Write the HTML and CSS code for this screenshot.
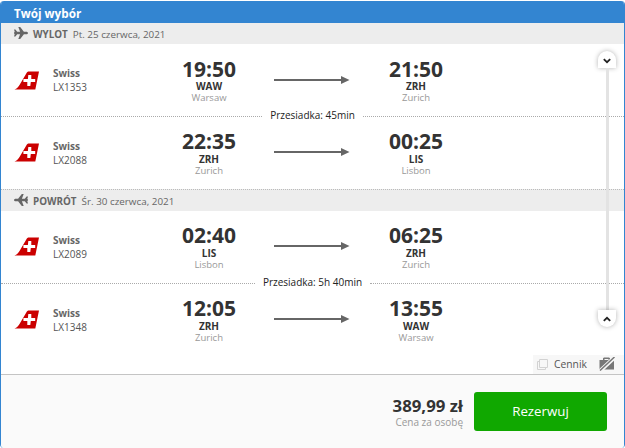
FILE: index.html
```html
<!DOCTYPE html>
<html lang="pl">
<head>
<meta charset="utf-8">
<title>Twój wybór</title>
<link rel="stylesheet" href="styles.css">
</head>
<body>
<svg class="defs" width="0" height="0" aria-hidden="true">
  <symbol id="swiss" viewBox="0 0 25 19"><path fill="#cb0000" d="M.5 18.500C3 17.500 4 16 5.500 14L12 3C13 1 13.500.5 15.500.5H25L21.300 18.500z"/><path fill="#fff" d="M14.300 4h3v4h3.900v3h-4.400l-.5 4h-3v-4H9.400V8h4.500z"/></symbol>
  <symbol id="plane" viewBox="0 0 14 12"><path fill="#666" d="M0 2.500h1.400l1.800 2.200h2.900L4.300 0h1.900l3.700 4.700H12c1.300 0 2 .6 2 1.300s-.7 1.300-2 1.300H9.900L6.200 12H4.300l1.800-4.700H3.200L1.400 9.500H0l.8-2.700H0V5.200h.8z"/></symbol>
  <symbol id="arrow" viewBox="0 0 76 10"><path fill="#666" d="M0 4h67V1l8.500 4L67 9V6H0z"/></symbol>
</svg>
<main class="card">
  <h1 class="title">Twój wybór</h1>
  <div class="trip">
    <h2 class="leg"><svg class="plane"><use href="#plane"/></svg><b>WYLOT</b><span>Pt. 25 czerwca, 2021</span></h2>
    <section class="flight first">
      <svg class="logo"><use href="#swiss"/></svg>
      <div class="carrier"><b>Swiss</b><span>LX1353</span></div>
      <div class="stop"><time>19:50</time><b>WAW</b><span>Warsaw</span></div>
      <svg class="arrow"><use href="#arrow"/></svg>
      <div class="stop"><time>21:50</time><b>ZRH</b><span>Zurich</span></div>
    </section>
    <div class="transfer"><span>Przesiadka: 45min</span></div>
    <section class="flight">
      <svg class="logo"><use href="#swiss"/></svg>
      <div class="carrier"><b>Swiss</b><span>LX2088</span></div>
      <div class="stop"><time>22:35</time><b>ZRH</b><span>Zurich</span></div>
      <svg class="arrow"><use href="#arrow"/></svg>
      <div class="stop"><time>00:25</time><b>LIS</b><span>Lisbon</span></div>
    </section>
    <h2 class="leg back"><svg class="plane"><use href="#plane"/></svg><b>POWRÓT</b><span>Śr. 30 czerwca, 2021</span></h2>
    <section class="flight">
      <svg class="logo"><use href="#swiss"/></svg>
      <div class="carrier"><b>Swiss</b><span>LX2089</span></div>
      <div class="stop"><time>02:40</time><b>LIS</b><span>Lisbon</span></div>
      <svg class="arrow"><use href="#arrow"/></svg>
      <div class="stop"><time>06:25</time><b>ZRH</b><span>Zurich</span></div>
    </section>
    <div class="transfer"><span>Przesiadka: 5h 40min</span></div>
    <section class="flight">
      <svg class="logo"><use href="#swiss"/></svg>
      <div class="carrier"><b>Swiss</b><span>LX1348</span></div>
      <div class="stop"><time>12:05</time><b>ZRH</b><span>Zurich</span></div>
      <svg class="arrow"><use href="#arrow"/></svg>
      <div class="stop"><time>13:55</time><b>WAW</b><span>Warsaw</span></div>
    </section>
    <div class="scroll">
      <button class="knob up" aria-label="Zwiń"><svg viewBox="0 0 8 6"><path d="M.8 1.200 4 4.200l3.200-3"/></svg></button>
      <i class="track"></i>
      <button class="knob down" aria-label="Rozwiń"><svg viewBox="0 0 8 6"><path d="M.8 4.800 4 1.800l3.200 3"/></svg></button>
    </div>
  </div>
  <div class="extras">
    <svg class="copy" viewBox="0 0 11 11"><path fill="none" stroke="#d2d2d2" d="M2.500.5h8v8h-8zM2.500 2.500h-2v8h8v-2"/></svg>
    <span>Cennik</span>
    <svg class="bag" viewBox="0 0 16 14"><path fill="#777" fill-rule="evenodd" d="M.5 3H4V1.200L5 .5h5l1 .7V3h4v9.500H.5zM5.500 2v1h4V2z"/><path stroke="#f7f7f7" stroke-width="4" d="M1 14 15.500.5"/><path stroke="#777" stroke-width="1.500" d="M1 13.500 15.500 0"/></svg>
  </div>
  <footer class="summary">
    <div class="price"><strong>389,99 zł</strong><span>Cena za osobę</span></div>
    <button class="book">Rezerwuj</button>
  </footer>
</main>
</body>
</html>
```

FILE: styles.css
```css
* { box-sizing: border-box; }
body {
  margin: 0;
  background: #fff;
  font: 10px/14px "Open Sans", "Noto Sans", sans-serif;
  color: #555;
}
.defs { display: block; height: 0; }
.card {
  width: 625px;
  height: 447px;
  margin-top: 1px;
  border: 1px solid #3385d1;
  border-top: 0;
  border-bottom: 0;
  border-radius: 4px;
  overflow: hidden;
  display: flex;
  flex-direction: column;
}
.title {
  margin: 0;
  height: 22px;
  padding: 1px 0 0 13px;
  font-size: 11.700px;
  line-height: 22px;
  font-weight: 700;
  color: #fff;
  background: #3385d1;
}
.trip { position: relative; height: 332px; }
.leg {
  display: flex;
  align-items: center;
  margin: 0;
  height: 21px;
  padding: 1px 0 0 13px;
  background: #ededed;
  font-size: 9.850px;
  font-weight: 400;
  color: #666;
}
.leg.back { height: 22px; padding-top: 0; border-top: 1px dotted #bbb; }
.leg b { margin-right: 5px; }
.plane { width: 14px; height: 12px; margin: -2px 5px 0 0; }
.back .plane { transform: scaleX(-1); }
.flight {
  display: grid;
  grid-template-columns: 25px 115px 110px 96px 112px;
  height: 72px;
  padding: 12px 0 0 13px;
}
.flight.first { padding-top: 13px; }
.logo { width: 25px; height: 19px; margin-top: 14px; }
.carrier { display: flex; flex-direction: column; padding: 10px 0 0 14px; }
.first .carrier { padding-top: 9px; }
.carrier b { color: #666; }
.stop { display: flex; flex-direction: column; align-items: center; }
.stop time { font-size: 21px; line-height: 24px; font-weight: 700; color: #333; }
.stop b { line-height: 12px; color: #333; }
.stop span { line-height: 11px; font-size: 9.500px; color: #999; }
.first .stop b { line-height: 11px; }
.first .stop span { line-height: 12px; }
.arrow { width: 76px; height: 10px; margin-top: 18px; justify-self: center; }
.transfer {
  display: flex;
  align-items: center;
  gap: 8px;
  height: 1px;
  color: #222;
}
.transfer span { margin-top: -3px; }
.transfer::before, .transfer::after { content: ""; flex: 1; border-top: 1px dotted #aaa; }
.scroll {
  position: absolute;
  right: 8px;
  top: 28px;
  width: 18px;
  height: 276px;
  display: flex;
  flex-direction: column;
  align-items: center;
}
.track { flex: 1; width: 3px; background: #e3e3e3; }
.knob {
  display: flex;
  align-items: center;
  justify-content: center;
  width: 18px;
  height: 17px;
  padding: 0;
  border: 0;
  background: #fff;
  box-shadow: 0 0 5px rgba(0,0,0,.3);
}
.knob.up { border-radius: 9px 9px 0 0; padding-top: 2px; }
.knob.down { border-radius: 0 0 9px 9px; }
.knob svg { width: 8px; height: 6px; fill: none; stroke: #222; stroke-width: 1.800; }
.extras {
  display: flex;
  align-items: center;
  align-self: flex-end;
  width: 91px;
  height: 19px;
  padding: 0 0 1px 4px;
  background: #f7f7f7;
}
.copy { width: 11px; height: 11px; }
.extras span { margin: 0 12px 0 6px; font-size: 10.300px; }
.bag { width: 16px; height: 14px; }
.summary {
  display: flex;
  justify-content: flex-end;
  height: 74px;
  padding: 17px 17px 0 0;
  border-top: 1px solid #c4c4c4;
  background: #fafafa;
}
.price { display: flex; flex-direction: column; align-items: flex-end; padding: 5px 11px 0 0; }
.price strong { font-size: 16.800px; line-height: 18px; color: #333; }
.price span { color: #999; }
.book {
  width: 133px;
  height: 39px;
  padding: 0;
  border: 0;
  border-radius: 3px;
  background: #10a800;
  font: 13.300px/37px "Open Sans", "Noto Sans", sans-serif;
  color: #fff;
}
```
